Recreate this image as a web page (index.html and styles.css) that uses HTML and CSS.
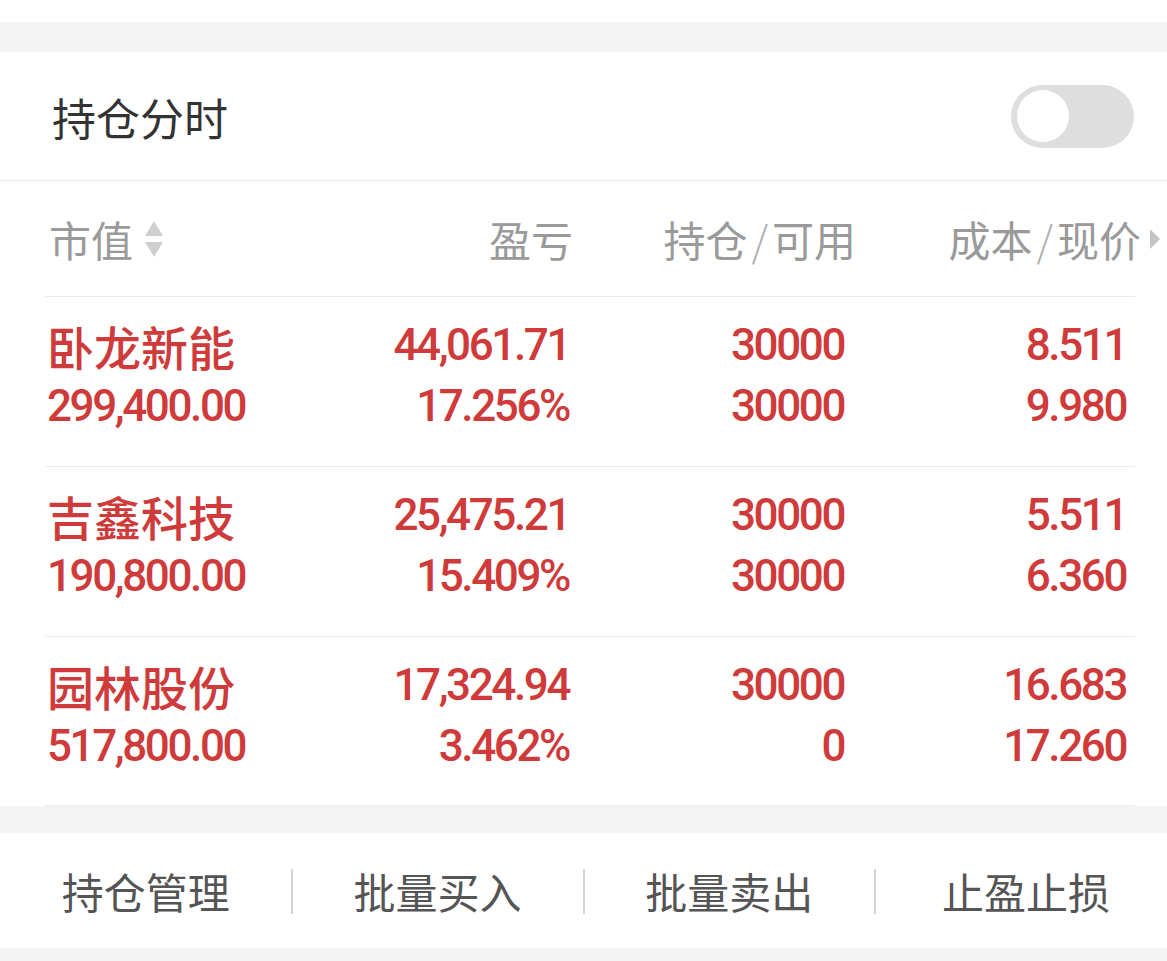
FILE: index.html
```html
<!DOCTYPE html>
<html lang="zh-CN">
<head>
<meta charset="utf-8">
<title>持仓</title>
<link rel="stylesheet" href="styles.css">
</head>
<body>
<div class="top-space"></div>
<div class="band band-top"></div>
<section class="panel">
  <div class="panel-head">
    <span class="panel-title">持仓分时</span>
    <span class="toggle"><span class="knob"></span></span>
  </div>
  <div class="col-head">
    <div class="ch ch-left">市值<svg class="sort" width="22" height="40" viewBox="0 0 22 40"><path d="M11 2 L20 17 L2 17 Z" fill="#cfcfcf"/><path d="M2 23 L20 23 L11 38 Z" fill="#cfcfcf"/></svg></div>
    <div class="ch">盈亏</div>
    <div class="ch">持仓<span class="slash">/</span>可用</div>
    <div class="ch">成本<span class="slash">/</span>现价<svg class="more" width="12" height="22" viewBox="0 0 12 22"><path d="M1 1 L11 11 L1 21 Z" fill="#c4c4c4"/></svg></div>
  </div>
  <div class="rows">
    <div class="row">
      <div class="cell cell-left"><div class="name">卧龙新能</div><div class="num">299,400.00</div></div>
      <div class="cell"><div class="num">44,061.71</div><div class="num">17.256%</div></div>
      <div class="cell"><div class="num">30000</div><div class="num">30000</div></div>
      <div class="cell"><div class="num">8.511</div><div class="num">9.980</div></div>
    </div>
    <div class="row">
      <div class="cell cell-left"><div class="name">吉鑫科技</div><div class="num">190,800.00</div></div>
      <div class="cell"><div class="num">25,475.21</div><div class="num">15.409%</div></div>
      <div class="cell"><div class="num">30000</div><div class="num">30000</div></div>
      <div class="cell"><div class="num">5.511</div><div class="num">6.360</div></div>
    </div>
    <div class="row">
      <div class="cell cell-left"><div class="name">园林股份</div><div class="num">517,800.00</div></div>
      <div class="cell"><div class="num">17,324.94</div><div class="num">3.462%</div></div>
      <div class="cell"><div class="num">30000</div><div class="num">0</div></div>
      <div class="cell"><div class="num">16.683</div><div class="num">17.260</div></div>
    </div>
  </div>
</section>
<div class="band band-mid"></div>
<nav class="actions">
  <div class="action">持仓管理</div>
  <div class="action">批量买入</div>
  <div class="action">批量卖出</div>
  <div class="action">止盈止损</div>
</nav>
<div class="band band-bottom"></div>
</body>
</html>
```

FILE: styles.css
```css
* { box-sizing: border-box; }
html, body { margin: 0; padding: 0; }
body {
  width: 1167px;
  height: 961px;
  overflow: hidden;
  background: #ffffff;
  font-family: "Noto Sans CJK SC", "Noto Sans", sans-serif;
}
.top-space { height: 22px; background: #ffffff; }
.band { background: #f4f4f4; }
.band-top { height: 30px; }
.band-mid { height: 27px; }
.band-bottom { height: 13px; }

.panel { background: #ffffff; }
.panel-head {
  height: 129px;
  display: flex;
  align-items: center;
  justify-content: space-between;
  padding: 0 33px 0 52px;
  border-bottom: 1px solid #e9e9e9;
}
.panel-title {
  font-size: 44px;
  color: #333333;
  line-height: 1;
  margin-top: 2px;
}
.toggle {
  width: 123px;
  height: 63px;
  border-radius: 32px;
  background: #dedede;
  display: flex;
  align-items: center;
  padding-left: 6px;
}
.knob {
  width: 52px;
  height: 52px;
  border-radius: 50%;
  background: #ffffff;
}

.col-head {
  height: 115px;
  display: grid;
  grid-template-columns: 250px 274px 283px 305px;
  align-items: center;
  padding-left: 49px;
  color: #9a9a9a;
  font-size: 42px;
}
.ch {
  display: flex;
  align-items: center;
  justify-content: flex-end;
  line-height: 1;
}
.ch-left { justify-content: flex-start; }
.slash { margin: 0 4px; color: #b0b0b0; font-weight: 300; }
.sort { margin-left: 10px; }
.more { margin-left: 8px; }

.rows { padding: 0 32px 0 45px; }
.row {
  display: grid;
  grid-template-columns: 252px 270px 275px 282px;
  padding: 18px 11px 29px 2px;
  color: #cf3a3a;
  border-bottom: 1px solid #ececec;
}
.row:first-child { height: 171px; border-top: 1px solid #ececec; }
.row + .row { height: 170px; }
.row:last-child { height: 169px; }
.cell { text-align: right; }
.cell-left { text-align: left; }
.name {
  font-size: 47px;
  font-weight: 500;
  line-height: 61px;
}
.num {
  font-family: Roboto, "Liberation Sans", sans-serif;
  font-size: 44px;
  font-weight: 500;
  letter-spacing: -2.4px;
  line-height: 61px;
}
.cell .num { margin-right: 0; }

.actions {
  height: 115px;
  display: grid;
  grid-template-columns: repeat(4, 1fr);
  align-items: center;
  background: #ffffff;
}
.action {
  text-align: center;
  font-size: 42px;
  color: #555555;
  line-height: 1;
  position: relative;
}
.action:nth-child(4) { padding-left: 10px; }
.action + .action::before {
  content: "";
  position: absolute;
  left: -1px;
  top: -1px;
  width: 2px;
  height: 45px;
  background: #d4d4d4;
}
```
